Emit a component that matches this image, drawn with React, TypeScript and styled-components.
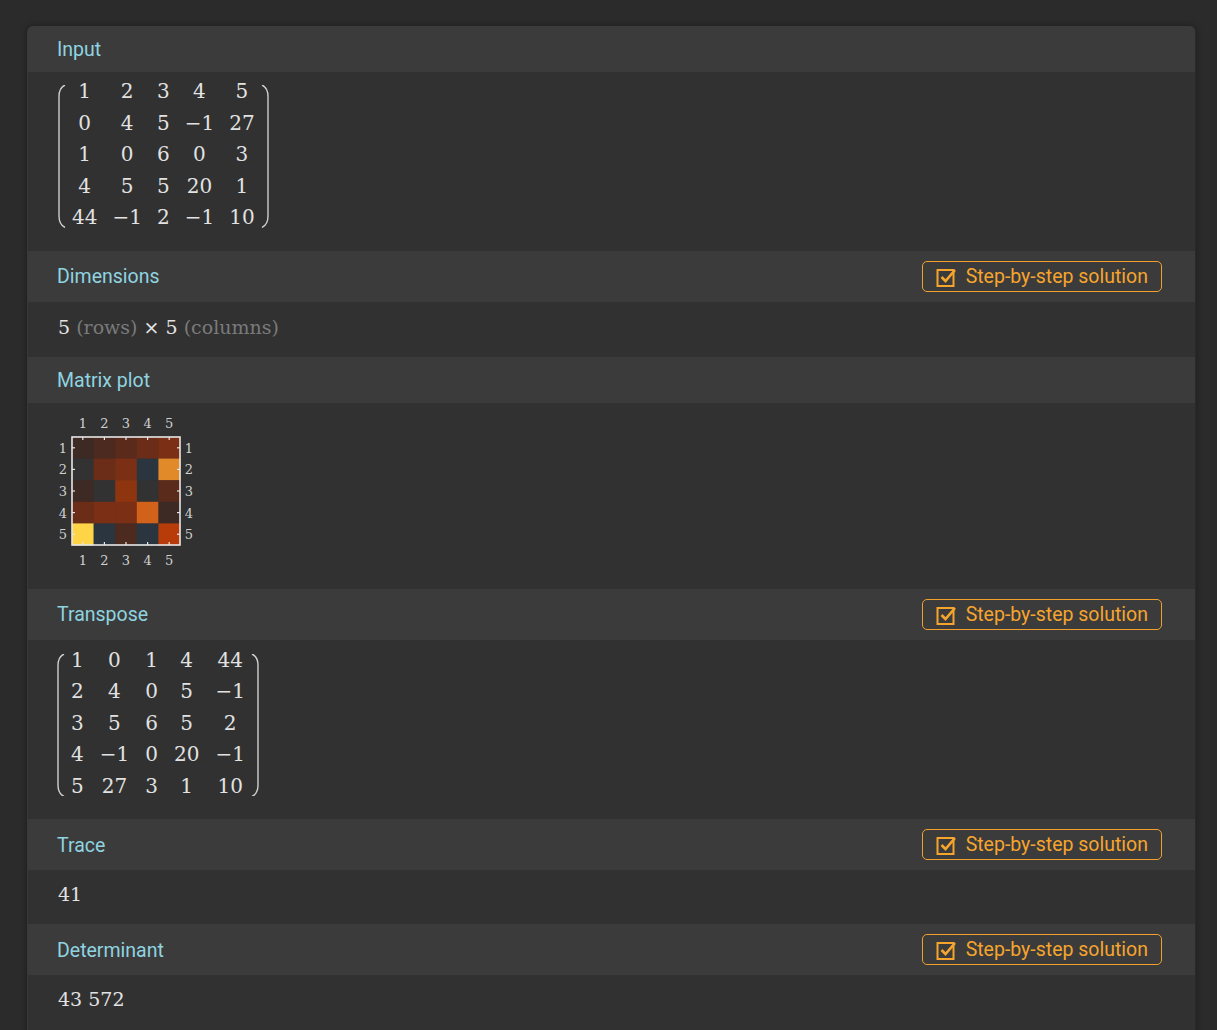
import React from "react";
import styled, { createGlobalStyle } from "styled-components";

const GlobalStyle = createGlobalStyle`
  html, body {
    margin: 0;
    padding: 0;
    background: #2b2b2b;
  }
  body {
    font-family: "Roboto", "Liberation Sans", sans-serif;
    height: 1030px;
    overflow: hidden;
  }
`;

const Page = styled.div`
  padding: 26px 21px 0 27px;
`;

const Card = styled.div`
  background: #313131;
  border-radius: 6px 6px 0 0;
  box-shadow: 0 0 6px rgba(0, 0, 0, 0.35);
  border-left: 1px solid #383838;
  border-right: 1px solid #2a2a2a;
  overflow: hidden;
`;

const PodHeader = styled.div<{ $tall?: boolean }>`
  display: flex;
  align-items: center;
  justify-content: space-between;
  background: #3b3b3b;
  height: ${(p) => (p.$tall ? "51px" : "46px")};
  padding: 0 33px 0 29px;
  box-sizing: border-box;
`;

const PodTitle = styled.div`
  color: #8fd4e0;
  font-size: 19.5px;
  font-weight: 400;
  margin-top: 1px;
`;

const StepButton = styled.button`
  display: flex;
  align-items: center;
  gap: 9px;
  height: 31px;
  padding: 0 13px 0 13px;
  background: transparent;
  border: 1px solid #f1a02c;
  border-radius: 5px;
  color: #f5a52e;
  font-family: "Roboto", "Liberation Sans", sans-serif;
  font-size: 19.5px;
  cursor: pointer;
`;

const PodBody = styled.div<{ $pad: string }>`
  padding: ${(p) => p.$pad};
  color: #e2e2e2;
  font-family: "DejaVu Serif", "Liberation Serif", serif;
  font-size: 19px;
`;

const MathLine = styled.div`
  line-height: 24px;
`;

const Muted = styled.span`
  color: #7a7a7a;
`;

const MatrixWrap = styled.div`
  display: inline-flex;
  align-items: stretch;
  gap: 2px;
`;

const Paren = styled.svg`
  width: 9px;
  align-self: stretch;
  margin: 9px 0 6px;
`;

const MatrixGrid = styled.div<{ $gap: number }>`
  display: grid;
  grid-template-columns: repeat(5, auto);
  column-gap: ${(p) => p.$gap}px;
  justify-items: center;
  font-size: 20px;
  line-height: 31.5px;
  padding: 0 3px;
`;

const inputMatrix = [
  [1, 2, 3, 4, 5],
  [0, 4, 5, -1, 27],
  [1, 0, 6, 0, 3],
  [4, 5, 5, 20, 1],
  [44, -1, 2, -1, 10],
];

const transposed = inputMatrix[0].map((_, c) => inputMatrix.map((row) => row[c]));

const cellColors: Record<number, string> = {
  [-1]: "#2a3540",
  0: "#323232",
  1: "#3e2a24",
  2: "#4d2a1f",
  3: "#5a2b1b",
  4: "#6c2d18",
  5: "#7b3016",
  6: "#8e3510",
  10: "#b83c0a",
  20: "#d2621a",
  27: "#e08a2a",
  44: "#ffd447",
};

const fmt = (n: number) => (n < 0 ? `\u2212${-n}` : String(n));

const Bracket = ({ side }: { side: "l" | "r" }) => (
  <Paren viewBox="0 0 9 100" preserveAspectRatio="none">
    <path
      d={side === "l" ? "M7 0 Q1 2 1 8 L1 92 Q1 98 7 100" : "M2 0 Q8 2 8 8 L8 92 Q8 98 2 100"}
      stroke="#cfcfcf"
      strokeWidth="1.4"
      fill="none"
      vectorEffect="non-scaling-stroke"
    />
  </Paren>
);

const Matrix = ({ data, gap }: { data: number[][]; gap: number }) => (
  <MatrixWrap>
    <Bracket side="l" />
    <MatrixGrid $gap={gap}>
      {data.flat().map((v, i) => (
        <span key={i}>{fmt(v)}</span>
      ))}
    </MatrixGrid>
    <Bracket side="r" />
  </MatrixWrap>
);

const CheckIcon = () => (
  <svg width="21" height="21" viewBox="0 0 21 21">
    <rect x="1.5" y="4" width="16" height="16" fill="none" stroke="#f5a52e" strokeWidth="2" />
    <path d="M5.5 11 L9.5 15 L19 4" fill="none" stroke="#f5a52e" strokeWidth="2.6" />
  </svg>
);

const StepSolution = () => (
  <StepButton>
    <CheckIcon />
    Step-by-step solution
  </StepButton>
);

const MatrixPlot = () => {
  const x0 = 14;
  const y0 = 27;
  const s = 21.6;
  const labels = [1, 2, 3, 4, 5];
  const label = { fill: "#cfcfcf", fontSize: 13, fontFamily: "DejaVu Serif, serif", textAnchor: "middle" as const };
  return (
    <svg width="140" height="165" viewBox="0 0 140 165">
      {inputMatrix.map((row, r) =>
        row.map((v, c) => (
          <rect key={`${r}-${c}`} x={x0 + c * s} y={y0 + r * s} width={s + 0.3} height={s + 0.3} fill={cellColors[v]} />
        ))
      )}
      <rect x={x0} y={y0} width={s * 5} height={s * 5} fill="none" stroke="#e6e6e6" strokeWidth="1.6" />
      {labels.map((l, i) => {
        const cx = x0 + s * i + s / 2;
        const cy = y0 + s * i + s / 2;
        return (
          <g key={l}>
            <line x1={cx} y1={y0} x2={cx} y2={y0 + 3} stroke="#e6e6e6" strokeWidth="1.2" />
            <line x1={cx} y1={y0 + s * 5} x2={cx} y2={y0 + s * 5 - 3} stroke="#e6e6e6" strokeWidth="1.2" />
            <line x1={x0} y1={cy} x2={x0 + 3} y2={cy} stroke="#e6e6e6" strokeWidth="1.2" />
            <line x1={x0 + s * 5} y1={cy} x2={x0 + s * 5 - 3} y2={cy} stroke="#e6e6e6" strokeWidth="1.2" />
            <text x={cx} y={18} {...label}>{l}</text>
            <text x={cx} y={155} {...label}>{l}</text>
            <text x={5} y={cy + 5} {...label}>{l}</text>
            <text x={131} y={cy + 5} {...label}>{l}</text>
          </g>
        );
      })}
    </svg>
  );
};

export default function App() {
  return (
    <>
      <GlobalStyle />
      <Page>
        <Card>
          <PodHeader>
            <PodTitle>Input</PodTitle>
          </PodHeader>
          <PodBody $pad="4px 30px 17px 30px">
            <Matrix data={inputMatrix} gap={15} />
          </PodBody>

          <PodHeader $tall>
            <PodTitle>Dimensions</PodTitle>
            <StepSolution />
          </PodHeader>
          <PodBody $pad="13px 30px 18px 30px">
            <MathLine>
              5 <Muted>(rows)</Muted> × 5 <Muted>(columns)</Muted>
            </MathLine>
          </PodBody>

          <PodHeader>
            <PodTitle>Matrix plot</PodTitle>
          </PodHeader>
          <PodBody $pad="7px 30px 10px 30px">
            <MatrixPlot />
          </PodBody>

          <PodHeader $tall>
            <PodTitle>Transpose</PodTitle>
            <StepSolution />
          </PodHeader>
          <PodBody $pad="5px 30px 17px 29px">
            <Matrix data={transposed} gap={16} />
          </PodBody>

          <PodHeader $tall>
            <PodTitle>Trace</PodTitle>
            <StepSolution />
          </PodHeader>
          <PodBody $pad="12px 30px 18px 30px">
            <MathLine>41</MathLine>
          </PodBody>

          <PodHeader $tall>
            <PodTitle>Determinant</PodTitle>
            <StepSolution />
          </PodHeader>
          <PodBody $pad="12px 30px 30px 30px">
            <MathLine>43 572</MathLine>
          </PodBody>
        </Card>
      </Page>
    </>
  );
}
